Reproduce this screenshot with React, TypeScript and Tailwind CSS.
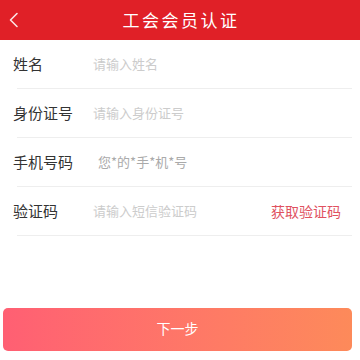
import React from "react";

const font = { fontFamily: '"Noto Sans CJK SC", "Noto Sans", sans-serif' };

function Row({ label, placeholder, extra, phClass }: { label: string; placeholder: string; extra?: React.ReactNode; phClass?: string }) {
  return (
    <div className="flex h-[48px] items-center">
      <div className="w-[93px] pl-[13px] text-[15px] text-[#333]">{label}</div>
      <div className={`flex-1 text-[13px] ${phClass ?? "text-[#cccccc]"}`}>{placeholder}</div>
      {extra}
    </div>
  );
}

export default function App() {
  return (
    <div className="h-[360px] w-[360px] bg-white" style={font}>
      <div className="relative flex h-[40px] items-center justify-center bg-[#e02027]">
        <svg className="absolute left-[8px] top-[12px]" width="12" height="16" viewBox="0 0 12 16" fill="none">
          <path d="M9 1.5L2.5 8L9 14.5" stroke="#fbe3e3" strokeWidth="1.6" strokeLinecap="round" strokeLinejoin="round" />
        </svg>
        <span className="pl-[2px] text-[17px] tracking-[2.5px] text-white">工会会员认证</span>
      </div>
      <div className="flex flex-col">
        <Row label="姓名" placeholder="请输入姓名" />
        <div className="ml-[17px] mr-[8px] h-px bg-[#eeeeee]" />
        <Row label="身份证号" placeholder="请输入身份证号" />
        <div className="ml-[17px] mr-[8px] h-px bg-[#eeeeee]" />
        <Row label="手机号码" placeholder="您*的*手*机*号" phClass="pl-[5px] text-[11px] text-[#aaaaaa]" />
        <div className="ml-[17px] mr-[8px] h-px bg-[#eeeeee]" />
        <Row
          label="验证码"
          placeholder="请输入短信验证码"
          extra={<span className="pr-[19px] text-[14px] text-[#e0525f]">获取验证码</span>}
        />
        <div className="ml-[17px] mr-[8px] h-px bg-[#eeeeee]" />
      </div>
      <div className="mt-[72px] px-[3px] pr-[8px]">
        <div className="flex h-[43px] items-center justify-center rounded-[5px] bg-gradient-to-r from-[#ff5f73] to-[#fd8a5a] pb-[2px] text-[14px] text-white">
          下一步
        </div>
      </div>
    </div>
  );
}
